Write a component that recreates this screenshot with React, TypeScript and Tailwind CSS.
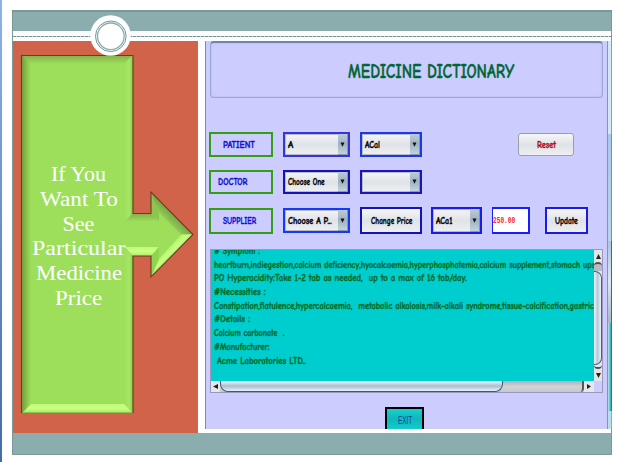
import { useLayoutEffect, useRef, useState } from "react";
import type { ReactNode } from "react";

// Sets a line of text to an exact width by scaling it horizontally.
function Fit({ w, children, className = "" }: { w: number; children: ReactNode; className?: string }) {
  const ref = useRef<HTMLSpanElement>(null);
  const [scale, setScale] = useState(1);
  useLayoutEffect(() => {
    if (ref.current) setScale(w / ref.current.offsetWidth);
  }, [w]);
  return (
    <span className={`block shrink-0 ${className}`} style={{ width: w }}>
      <span ref={ref} className="inline-block origin-left whitespace-pre" style={{ transform: `scaleX(${scale})` }}>
        {children}
      </span>
    </span>
  );
}

const comic = "font-['Comic_Sans_MS','Comic_Neue','Open_Sans',sans-serif] font-bold [-webkit-text-stroke:0.35px_currentColor] [font-variant-ligatures:none]";

function Label({ text, w, className }: { text: string; w: number; className: string }) {
  return (
    <div className={`flex w-16 items-center border-2 border-[#339d13] text-[10px] leading-none text-[#1111cf] ${className}`}>
      <Fit w={w}>{text}</Fit>
    </div>
  );
}

function Combo({ text, w = 0, className }: { text?: string; w?: number; className: string }) {
  return (
    <div className={`flex border-2 bg-gradient-to-b from-[#f4f5f8] via-[#dfe2e7] to-[#eef0f3] text-[9.5px] leading-none text-black ${className}`}>
      <div className="flex flex-1 items-center border border-r-0 border-[#b5bac5] pl-[2px]">
        {text && <Fit w={w}>{text}</Fit>}
      </div>
      <div className="flex w-[10px] shrink-0 items-center justify-center border-r border-b border-[#8898a8] bg-gradient-to-b from-[#bdcbd7] via-[#9fb2c1] to-[#c1d3df]">
        <svg width="5" height="5" viewBox="0 0 5 5"><path d="M.5 .4h4L2.5 4.8z" fill="#111" /></svg>
      </div>
    </div>
  );
}

function PushButton({ text, w, className }: { text: string; w: number; className: string }) {
  return (
    <div className={`flex items-center justify-center bg-gradient-to-b from-[#f6f7f9] via-[#dfe2e7] to-[#edeff2] text-[9.5px] leading-none ${className}`}>
      <Fit w={w}>{text}</Fit>
    </div>
  );
}

const lines: [string, number][] = [
  ["# Symptom :", 46],
  ["heartburn,indiegestion,calcium deficiency,hyocalcaemia,hyperphosphatemia,calcium supplement,stomach upset", 388],
  ["PO Hyperacidity:Take 1-2 tab as needed,  up to a max of 16 tab/day.", 253],
  ["#Necessities :", 52],
  ["Constipation,flatulence,hypercalcaemia,  metabolic alkalosis,milk-alkali syndrome,tissue-calcification,gastric", 380],
  ["#Details :", 36],
  ["Calcium carbonate  .", 70],
  ["#Manufacturer:", 56],
  [" Acme Laboratories LTD..", 92],
];

const caption: [string, number][] = [
  ["If You", 55],
  ["Want To", 78],
  ["See", 32],
  ["Particular", 94],
  ["Medicine", 86],
  ["Price", 47],
];

function GreenArrow() {
  return (
    <svg className="absolute left-0 top-0" width="185" height="392" viewBox="13 41 185 392">
      <defs>
        <linearGradient id="top" x2="0" y2="1"><stop stopColor="#81ad49" /><stop offset="1" stopColor="#9ddf5a" /></linearGradient>
        <linearGradient id="left"><stop stopColor="#72a13e" /><stop offset="1" stopColor="#9ddf5a" /></linearGradient>
        <linearGradient id="right"><stop stopColor="#9ddf5a" /><stop offset=".6" stopColor="#a4e765" /><stop offset="1" stopColor="#89c44c" /></linearGradient>
        <linearGradient id="bottom" x2="0" y2="1"><stop stopColor="#b5ff70" /><stop offset=".45" stopColor="#d1ff8b" /><stop offset="1" stopColor="#a8ee62" /></linearGradient>
        <linearGradient id="edge" gradientUnits="userSpaceOnUse" x1="172" y1="213" x2="163" y2="222"><stop stopColor="#79a346" /><stop offset="1" stopColor="#9ddf5a" /></linearGradient>
        <linearGradient id="glow" gradientUnits="userSpaceOnUse" x1="173" y1="257" x2="165" y2="249"><stop stopColor="#8fd34c" /><stop offset=".4" stopColor="#cfff88" /><stop offset="1" stopColor="#9ef65a" /></linearGradient>
      </defs>
      <path d="M22 55.5H133V213.500H151V192L193 234.500L151 277V256H133V413H22z" fill="#9ddf5a" />
      <path d="M22 55H133L124 64H31z" fill="url(#top)" />
      <path d="M22 55L31 64V404L22 413z" fill="url(#left)" />
      <path d="M133 55V213L124 222V64zM133 256V413L124 404V249z" fill="url(#right)" />
      <path d="M31 404H124L132 412.500H23z" fill="url(#bottom)" />
      <path d="M133 213H151L159 221.500H125z" fill="url(#top)" />
      <path d="M125 247H159L151 256H133z" fill="url(#bottom)" />
      <path d="M151 192L159 212V221.500L151 213z" fill="#8ac650" />
      <path d="M151 192L193 234.500H181L158 212z" fill="url(#edge)" />
      <path d="M193 234.500L151 277L159 259L181 234.500z" fill="url(#glow)" />
      <path d="M151 256L159 247V259L151 277z" fill="#8fd34e" />
      <path d="M22 413H133" stroke="#6f9d3e" fill="none" />
      <path d="M21.500 413V55.500H133V213.500H151V192L193 234.500L151 277V256H133V413" fill="none" stroke="#63401f" strokeWidth="1.1" />
    </svg>
  );
}

export default function App() {
  return (
    <div className="relative flex h-[462px] w-[622px] overflow-hidden bg-white">
      <div className="mr-[10px] w-[2px] bg-gradient-to-b from-[#8fb3e6] to-[#466ca5]" />
      <div className="mt-[10px] flex h-[445px] w-[600px] flex-col border border-[#7c9999]">
        <div className="h-5 shrink-0 border-t border-[#779696] bg-[#8badad]" />
        <div className="h-[10px] shrink-0 pt-[5px]">
          <div className="h-px bg-[repeating-linear-gradient(90deg,#719696_0_3px,#c3d4d4_3px_4px)]" />
        </div>
        <div className="flex h-[392px] shrink-0">
          <div className="relative mr-[7px] w-[185px] shrink-0 bg-[#d06349]">
            <GreenArrow />
            <div className="relative flex w-[131px] flex-col items-center pt-[121px] font-['Georgia','Liberation_Serif',serif] text-[22px] leading-[24.8px] text-white">
              {caption.map(([t, w]) => <Fit key={t} w={w} className="h-[24.8px]">{t}</Fit>)}
            </div>
          </div>

          <div className={`flex h-[388px] w-[406px] shrink-0 border-l border-[#8587b5] bg-[#ccccff] ${comic}`}>
            <div className="w-[401px] shrink-0 pl-1">
              <div className="flex h-[57px] w-[393px] items-start justify-center rounded-[4px] border border-t-2 border-[#98a9d3] border-t-[#6d86ac] pt-[17px] text-[19.5px] leading-[24px] text-[#006633] shadow-[inset_0_0_2px_#a5b4dc]">
                <Fit w={166} className="ml-[48px]">MEDICINE DICTIONARY</Fit>
              </div>

              <div className="-ml-px mt-[34px] flex h-[25px]">
                <Label text="PATIENT" w={32} className="h-[25px] pl-3" />
                <Combo text="A" w={5} className="ml-[10px] w-[67px] border-[#3835d7]" />
                <Combo text="ACal" w={15} className="ml-[10px] w-[62px] border-[#1b39e9]" />
                <PushButton text="Reset" w={19} className="ml-24 mt-px h-[23px] w-[56px] rounded-[3px] border border-[#9c9da9] text-[#aa1020]" />
              </div>
              <div className="-ml-px mt-[13px] flex h-6">
                <Label text="DOCTOR" w={29} className="h-6 pl-[7px]" />
                <Combo text="Choose One" w={37} className="ml-[10px] w-[67px] border-[#1414b5]" />
                <Combo className="ml-[10px] w-[62px] border-[#1717bd]" />
              </div>
              <div className="-ml-px mt-[13px] flex h-[27px]">
                <Label text="SUPPLIER" w={33} className="mt-px h-[26px] pl-[12px]" />
                <Combo text="Choose A P..." w={44} className="ml-[10px] mt-px h-[25px] w-[67px] border-[#1639f4]" />
                <PushButton text="Change Price" w={41} className="ml-[10px] w-[62px] border-2 border-[#1313ba] text-black" />
                <Combo text="ACa1" w={16} className="ml-[9px] w-[51px] border-[#1b1be5]" />
                <div className="ml-[10px] flex w-[38px] items-center border-2 border-l border-[#1b1bff] bg-white text-[9.5px] leading-none text-[#ff2222] [-webkit-text-stroke:0]">
                  <Fit w={22} className="font-['Liberation_Mono',monospace]">250.00</Fit>
                </div>
                <PushButton text="Update" w={23} className="ml-[15px] w-[43px] border-2 border-[#1a1ae7] text-black" />
              </div>

              <div className="mt-[15px] flex h-[144px] w-[393px] flex-col border border-[#9898bd]">
                <div className="flex h-[131px]">
                  <div className="w-[383px] overflow-hidden bg-[#00cdcd] pl-[3px] text-[9.5px] leading-[13.7px] text-[#006b24]">
                    <div className="-mt-[6px]">
                      {lines.map(([t, w]) => <Fit key={t} w={w} className="h-[13.7px]">{t}</Fit>)}
                    </div>
                  </div>
                  <div className="flex w-2 flex-col bg-[#e4e5e9]">
                    <div className="flex h-3 items-center justify-center"><svg width="5" height="5" viewBox="0 0 5 5"><path d="M0 5L2.500 0 5 5z" fill="#222" /></svg></div>
                    <div className="h-[9px] rounded-t-full border-t-2 border-[#4d4d56] bg-[#b9bbc4]" />
                    <div className="h-[94px] rounded-r-[7px] border border-l-0 border-[#4b5e73] bg-gradient-to-r from-[#f3f7fb] via-[#b9c9da] to-[#e9f4fa]" />
                    <div className="h-1 rounded-b-full border-b-2 border-[#4d4d56]" />
                    <div className="flex h-3 items-center justify-center"><svg width="5" height="5" viewBox="0 0 5 5"><path d="M0 0H5L2.500 5z" fill="#222" /></svg></div>
                  </div>
                </div>
                <div className="flex h-[11px] w-[383px] bg-gradient-to-b from-[#aeb0b7] via-[#d2d3d8] to-[#c6c8cf]">
                  <div className="flex w-[9px] items-center justify-center bg-[#e6e7ea]"><svg width="5" height="5" viewBox="0 0 5 5"><path d="M5 0V5L0 2.500z" fill="#222" /></svg></div>
                  <div className="w-[283px] rounded-b-[8px] border border-t-0 border-[#405770] bg-gradient-to-b from-[#f5f7fa] via-[#aabed2] to-[#e7f5fb]" />
                  <div className="w-[81px] rounded-br-[4px] border-r-2 border-[#55565e]" />
                  <div className="flex flex-1 items-center justify-center bg-[#e6e7ea]"><svg width="4" height="5" viewBox="0 0 4 5"><path d="M0 0V5L4 2.500z" fill="#222" /></svg></div>
                </div>
              </div>

              <div className="ml-[175px] mt-[14px] flex h-[22px] w-[39px] items-center justify-center border-[2px] border-b-0 border-black bg-gradient-to-b from-[#16d0d0] via-[#10b7ba] to-[#12cccc] pt-[3px] font-['Liberation_Sans',sans-serif] text-[10.5px] font-normal leading-none text-[#0842a0] [-webkit-text-stroke:0]">
                <Fit w={14}>EXIT</Fit>
              </div>
            </div>
            <div className="flex w-[5px] shrink-0 flex-col border-l border-[#8b91b5] bg-[#d4e8f6]">
              <div className="h-[93px] border-r border-[#969ca6]" />
              <div className="h-[107px] border-r border-[#888f9c] bg-gradient-to-b from-[#a5c9ed] to-[#b9d4ed]" />
              <div className="h-[82px] border-r border-[#536278] bg-gradient-to-b from-[#a9c6e6] via-[#dce8f2] to-[#a7b9c9]" />
              <div className="h-[88px] border-r border-[#34787c] bg-gradient-to-r from-[#b8e4ee] to-[#11a8ae]" />
              <div className="flex-1 border-r border-[#9ba4b0] bg-[#b9dcef]" />
            </div>
          </div>
        </div>
        <div className="flex-1 bg-[#8badad]" />
      </div>
      <svg className="absolute left-[90px] top-[15px]" width="41" height="41" viewBox="0 0 41 41">
        <circle cx="20.500" cy="20.500" r="20.300" fill="#fff" />
        <circle cx="20.800" cy="21.300" r="15.300" fill="none" stroke="#719494" />
        <circle cx="20.800" cy="21.300" r="13.300" fill="none" stroke="#8badad" strokeWidth="1.300" />
      </svg>
    </div>
  );
}
